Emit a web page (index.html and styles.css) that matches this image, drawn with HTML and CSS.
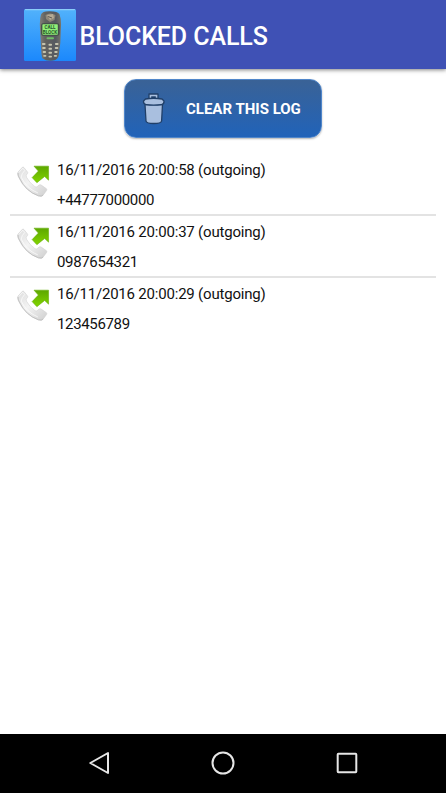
FILE: index.html
```html
<!DOCTYPE html>
<html lang="en">

<head>
    <meta charset="utf-8">
    <meta name="viewport" content="width=device-width, initial-scale=1">
    <title>Blocked Calls</title>
    <link rel="stylesheet" href="styles.css">
</head>

<body>
    <header class="app-bar">
        <svg class="logo" viewBox="0 0 52 52">
            <defs>
                <linearGradient id="sky" x1="0" y1="0" x2="0" y2="1">
                    <stop offset="0" stop-color="#52b2fb" />
                    <stop offset="1" stop-color="#1b88fc" />
                </linearGradient>
                <linearGradient id="shell" x1="0" y1="0" x2="1" y2="0">
                    <stop offset="0" stop-color="#817f78" />
                    <stop offset=".25" stop-color="#62625f" />
                    <stop offset=".75" stop-color="#555960" />
                    <stop offset="1" stop-color="#78756a" />
                </linearGradient>
            </defs>
            <rect width="52" height="52" rx="1.5" fill="url(#sky)" />
            <rect x="1" width="50" height="1.2" rx=".6" fill="#8acdfa" />
            <path d="M17 5.500Q18 2.300 25 2.200Q33.800 2 35.500 5.300Q37.300 10 37 17L36.300 34L34.800 46Q34.300 50.800 29 51.600Q22 52.200 18.600 49.500Q17.600 48 17.300 42L16 20Q15.400 10 17 5.500Z" fill="url(#shell)" />
            <path d="M21.500 6Q26 3 31.500 6L30.500 11L26 13L22 10Z" fill="#8e8778" />
            <path d="M23 6L29 5L30 9L26 11Z" fill="#b6aa94" />
            <path d="M24 7.500L28 9" stroke="#605c55" />
            <rect x="17" y="14" width="18.500" height="13" rx="3" fill="#46514a" />
            <rect x="18.400" y="15.300" width="15.400" height="10.400" rx=".8" fill="#91f078" />
            <text class="logo-text" x="26" y="20.200">CALL</text>
            <text class="logo-text" x="26" y="24.800">BLOCK</text>
            <rect x="22.500" y="28.300" width="7.500" height="2" rx="1" fill="#70bd68" />
            <g fill="#c6c4ae">
                <rect x="18" y="34" width="3.500" height="2" rx=".8" />
                <rect x="24.500" y="34.800" width="3.500" height="2" rx=".8" />
                <rect x="31" y="34" width="3.500" height="2" rx=".8" />
                <rect x="18.200" y="38" width="3.500" height="2" rx=".8" />
                <rect x="24.500" y="38.800" width="3.500" height="2" rx=".8" />
                <rect x="30.800" y="38" width="3.500" height="2" rx=".8" />
                <rect x="18.700" y="42" width="3.300" height="2" rx=".8" />
                <rect x="24.500" y="42.800" width="3.500" height="2" rx=".8" />
                <rect x="30.300" y="42" width="3.300" height="2" rx=".8" />
                <rect x="19.200" y="46" width="3.200" height="1.800" rx=".8" />
                <rect x="24.500" y="46.800" width="3.500" height="1.800" rx=".8" />
                <rect x="29.800" y="46" width="3.200" height="1.800" rx=".8" />
            </g>
        </svg>
        <h1 class="title">BLOCKED CALLS</h1>
    </header>

    <main class="content">
        <button class="clear-button" type="button">
            <svg class="trash" viewBox="0 0 24 32">
                <g fill="#a9bfdf" stroke="#203f68" stroke-width="1.300" stroke-linejoin="round">
                    <path d="M7 6V1H16V6Z" />
                    <path d="M9.200 3.300H13.800V5.300H9.200Z" fill="#203f68" stroke="none" />
                    <path d="M3 11.500H20.500L19.600 28Q19.400 30.500 11.800 30.500Q4.200 30.500 4 28Z" />
                    <path d="M3.500 6Q11.500 4.500 20 6L22 8Q22.300 11.200 19.500 11.600Q11.500 12.600 4 11.600Q1.300 11.200 1.500 8Z" />
                </g>
            </svg>
            <span>CLEAR THIS LOG</span>
        </button>

        <ul class="call-list">
            <li class="call">
                <svg class="call-icon" viewBox="0 0 34 34">
                    <defs>
                        <linearGradient id="handset" x1="0" y1="0" x2="1" y2="1">
                            <stop offset="0" stop-color="#dddddd" />
                            <stop offset=".45" stop-color="#f3f3f3" />
                            <stop offset="1" stop-color="#cfcfcf" />
                        </linearGradient>
                        <linearGradient id="arrow" x1="0" y1="0" x2="0" y2="1">
                            <stop offset="0" stop-color="#5da700" />
                            <stop offset="1" stop-color="#82d500" />
                        </linearGradient>
                        <g id="outgoing">
                            <path d="M1.200 7.200L5.600 2.300Q6.500 1.800 7.300 2.800L11 7.500Q11.300 8.500 10.300 9.300Q9 10.300 9.700 12.500Q13 18.500 18.500 22.300Q20 23.200 21.200 22L22.800 20.600Q23.800 20 25 20.700L30.400 24.500Q31.200 25.500 30.300 26.500L26.700 31.300Q25.300 33 21.800 31.800Q7.500 26.500 1.200 11.500Q.2 8.700 1.200 7.200Z" fill="url(#handset)" stroke="#d0d0d0" stroke-width=".6" />
                            <path d="M1.600 8L6 3.300L8 5.600Q4.800 8.600 4.300 12.500Q9.500 23.800 21.500 28.800" fill="none" stroke="#fff" stroke-width="1" opacity=".7" />
                            <path d="M1 8Q.8 10.500 2.500 13.500Q9.500 27.500 22 31.700Q25.500 32.800 27 30.800" fill="none" stroke="#b9b9b9" stroke-width=".8" />
                            <path d="M17.500 1.200H32.500V15.600L28.500 11.800L20.500 18.200L15.600 13L22 6.300Z" fill="url(#arrow)" stroke="#66ae0b" stroke-width=".6" />
                        </g>
                    </defs>
                    <use href="#outgoing" />
                </svg>
                <div class="details">
                    <div>16/11/2016 20:00:58 (outgoing)</div>
                    <div>+44777000000</div>
                </div>
            </li>
            <li class="call">
                <svg class="call-icon" viewBox="0 0 34 34"><use href="#outgoing" /></svg>
                <div class="details">
                    <div>16/11/2016 20:00:37 (outgoing)</div>
                    <div>0987654321</div>
                </div>
            </li>
            <li class="call">
                <svg class="call-icon" viewBox="0 0 34 34"><use href="#outgoing" /></svg>
                <div class="details">
                    <div>16/11/2016 20:00:29 (outgoing)</div>
                    <div>123456789</div>
                </div>
            </li>
        </ul>
    </main>

    <nav class="nav-bar">
        <svg class="nav-icon" viewBox="0 0 24 24"><path d="M3.300 12L21 2V22Z" /></svg>
        <svg class="nav-icon" viewBox="0 0 24 24"><circle cx="12" cy="12" r="10.500" /></svg>
        <svg class="nav-icon" viewBox="0 0 24 24"><rect x="2.700" y="2.700" width="18.600" height="18.600" rx=".7" /></svg>
    </nav>
</body>

</html>
```

FILE: styles.css
```css
* {
    box-sizing: border-box;
}

body {
    display: flex;
    flex-direction: column;
    height: 100vh;
    margin: 0;
    background-color: #fff;
    color: #111;
    font-family: Roboto, sans-serif;
}

.app-bar {
    display: flex;
    flex: none;
    align-items: center;
    gap: 4px;
    height: 69px;
    padding: 1px 0 0 23.5px;
    background-color: #3f51b5;
    box-shadow: 0 1px 4px rgba(0, 0, 0, 0.5);
}

.logo {
    width: 52px;
    height: 52px;
}

.logo-text {
    fill: #27582b;
    font-size: 4.6px;
    font-weight: bold;
    text-anchor: middle;
}

.title {
    margin: 0;
    padding-top: 3px;
    color: #fff;
    font-size: 25px;
    font-weight: 500;
    letter-spacing: -0.1px;
    line-height: 30px;
    white-space: nowrap;
}

.content {
    display: flex;
    flex: 1;
    flex-direction: column;
    padding: 10px 10px 0;
}

.clear-button {
    display: flex;
    align-items: center;
    align-self: center;
    gap: 20px;
    width: 198px;
    height: 59px;
    padding: 1px 0 0 17px;
    border: 1px solid #5086ca;
    border-radius: 12px;
    background: linear-gradient(#3a6296, #2163b9);
    box-shadow: 0 1px 2px rgba(0, 0, 0, 0.3);
    color: #fff;
    font-family: inherit;
    font-size: 15px;
    font-weight: 700;
    white-space: nowrap;
}

.trash {
    flex: none;
    width: 24px;
    height: 32px;
}

.call-list {
    margin: 16px 0 0;
    padding: 0;
    list-style: none;
}

.call {
    display: flex;
    gap: 7px;
    height: 62px;
    padding: 1px 0 0 7px;
    border-bottom: 2px solid #e3e3e3;
}

.call:last-child {
    border-bottom: none;
}

.call-icon {
    flex: none;
    width: 33px;
    height: 33px;
    margin-top: 10px;
}

.details {
    font-size: 15px;
    letter-spacing: -0.2px;
    line-height: 30px;
}

.call-list .details div:last-child {
    letter-spacing: -0.35px;
}

.nav-bar {
    display: flex;
    flex: none;
    align-items: center;
    justify-content: center;
    gap: 100px;
    height: 59.5px;
    background-color: #000;
}

.nav-icon {
    width: 24px;
    height: 24px;
    fill: none;
    stroke: #e6e6e6;
    stroke-width: 2;
    stroke-linejoin: round;
}
```
